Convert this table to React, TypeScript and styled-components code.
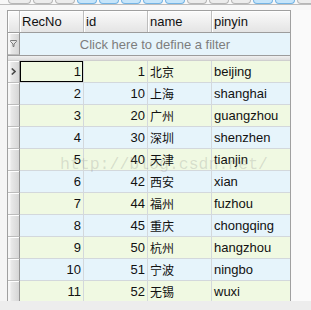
import React from "react";
import styled, { createGlobalStyle } from "styled-components";

const GlobalStyle = createGlobalStyle`
  html, body { margin: 0; padding: 0; background: #f7f7f7; }
  body { font-family: "Liberation Sans", Arial, sans-serif; }
`;

const COLS = "12px 64px 64px 64px 78px";

const Page = styled.div`
  position: relative;
  width: 311px;
  height: 310px;
  overflow: hidden;
  display: flex;
  flex-direction: column;
  background: #f7f7f7;
`;

const TopStrip = styled.div`
  height: 4px;
  border-bottom: 1px solid #bdbdbd;
  display: flex;
  gap: 2px;
  padding-left: 8px;
  align-items: flex-start;
`;

const TabButton = styled.div<{ $blue?: boolean; $wide?: boolean }>`
  flex: none;
  width: ${(p) => (p.$wide ? 23 : 20)}px;
  height: 4px;
  box-sizing: border-box;
  border: 1px solid ${(p) => (p.$blue ? "#74b4e4" : "#b6b6b6")};
  border-top: none;
  border-radius: 0 0 4px 4px;
  background: ${(p) => (p.$blue ? "#c6e5fa" : "#ececec")};
`;

const Main = styled.div`
  margin-top: 5px;
  display: flex;
  height: 291px;
`;

const LeftGutter = styled.div`
  width: 7px;
  background: #f5f5f5;
`;

const RightGutter = styled.div`
  flex: 1;
  background: #fafafa;
`;

const Grid = styled.div`
  width: 284px;
  box-sizing: border-box;
  border: 1px solid #a0a0a0;
  border-bottom: none;
  display: flex;
  flex-direction: column;
  overflow: hidden;
  background: #fff;
`;

const HeaderRow = styled.div`
  display: grid;
  grid-template-columns: ${COLS};
  height: 22px;
  box-sizing: border-box;
  border-bottom: 1px solid #9c9c9c;
`;

const HeaderCell = styled.div<{ $last?: boolean }>`
  box-sizing: border-box;
  background: linear-gradient(#fbfbfb, #e4e4e4);
  border-right: ${(p) => (p.$last ? "none" : "1px solid #bdbdbd")};
  box-shadow: inset 1px 1px 0 #ffffff;
  display: flex;
  align-items: center;
  padding-left: 2px;
  font-size: 13px;
  color: #111;
`;

const FilterRow = styled.div`
  display: grid;
  grid-template-columns: ${COLS};
  height: 22px;
`;

const Indicator = styled.div`
  box-sizing: border-box;
  border-right: 1px solid #949494;
  border-bottom: 1px solid #bcbcbc;
  background: linear-gradient(to right, #f6f6f6 0, #f6f6f6 2px, #e9e9e9 3px, #d6d6d6 100%);
  box-shadow: inset 0 1px 0 #ffffff;
  display: flex;
  align-items: center;
  justify-content: center;
`;

const FilterCell = styled.div`
  grid-column: 2 / -1;
  background: #e6f4fb;
  display: flex;
  align-items: center;
  justify-content: center;
  font-size: 13px;
  color: #7d7d7d;
`;

const Splitter = styled.div`
  height: 6px;
  box-sizing: border-box;
  border-top: 1px solid #9c9c9c;
  border-bottom: 1px solid #cfcfcf;
  background: linear-gradient(#f0f0f0, #dedede);
`;

const Body = styled.div`
  flex: 1;
  overflow: hidden;
`;

const DataRow = styled.div<{ $odd: boolean }>`
  display: grid;
  grid-template-columns: ${COLS};
  height: 22px;
  background: ${(p) => (p.$odd ? "#f0f9e2" : "#e6f4fb")};
`;

const Cell = styled.div<{ $align?: "left" | "right"; $last?: boolean; $cjk?: boolean; $bare?: boolean }>`
  box-sizing: border-box;
  border-right: ${(p) => (p.$last ? "none" : "1px solid #d3d8dc")};
  border-bottom: 1px solid #d3d8dc;
  display: flex;
  align-items: center;
  justify-content: ${(p) => (p.$align === "right" ? "flex-end" : "flex-start")};
  padding: ${(p) => (p.$bare ? "0" : p.$align === "right" ? "0 2px 0 0" : "0 0 0 2px")};
  font-size: ${(p) => (p.$cjk ? "12px" : "13px")};
  font-family: ${(p) =>
    p.$cjk
      ? '"Noto Sans CJK SC", "Liberation Sans", sans-serif'
      : '"Liberation Sans", Arial, sans-serif'};
  color: #111;
  white-space: nowrap;
`;

const FocusBox = styled.div`
  box-sizing: border-box;
  width: 100%;
  height: 100%;
  border: 1px solid #000;
  display: flex;
  align-items: center;
  justify-content: flex-end;
  padding-right: 1px;
`;

const BottomStrip = styled.div`
  height: 9px;
  background: #ededed;
`;

const Watermark = styled.div`
  position: absolute;
  left: 60px;
  top: 157px;
  font-family: "Liberation Mono", "Courier New", monospace;
  font-size: 16.5px;
  line-height: 1;
  color: rgba(110, 110, 110, 0.2);
  pointer-events: none;
  white-space: nowrap;
`;

const rows: [number, number, string, string][] = [
  [1, 1, "北京", "beijing"],
  [2, 10, "上海", "shanghai"],
  [3, 20, "广州", "guangzhou"],
  [4, 30, "深圳", "shenzhen"],
  [5, 40, "天津", "tianjin"],
  [6, 42, "西安", "xian"],
  [7, 44, "福州", "fuzhou"],
  [8, 45, "重庆", "chongqing"],
  [9, 50, "杭州", "hangzhou"],
  [10, 51, "宁波", "ningbo"],
  [11, 52, "无锡", "wuxi"],
];

const tabs = ["g", "g", "g", "b", "b", "b", "b", "b", "g", "g", "g", "b", "b", "g"];

const Funnel = () => (
  <svg width="7" height="7" viewBox="0 0 7 7">
    <path d="M0.5 0.5 H6.5 V1.5 L4 4 V6.5 H3 V4 L0.5 1.5 Z" fill="none" stroke="#7a7a7a" strokeWidth="1" />
  </svg>
);

const Arrow = () => (
  <svg width="5" height="7" viewBox="0 0 5 7">
    <path d="M0.8 0.5 L4 3.5 L0.8 6.5" fill="none" stroke="#4a4a4a" strokeWidth="1.6" />
  </svg>
);

export default function App() {
  return (
    <>
      <GlobalStyle />
      <Page>
        <TopStrip>
          {tabs.map((t, i) => (
            <TabButton key={i} $blue={t === "b"} $wide={i === 0} />
          ))}
        </TopStrip>
        <Main>
          <LeftGutter />
          <Grid>
            <HeaderRow>
              <HeaderCell />
              <HeaderCell>RecNo</HeaderCell>
              <HeaderCell>id</HeaderCell>
              <HeaderCell>name</HeaderCell>
              <HeaderCell $last>pinyin</HeaderCell>
            </HeaderRow>
            <FilterRow>
              <Indicator>
                <Funnel />
              </Indicator>
              <FilterCell>Click here to define a filter</FilterCell>
            </FilterRow>
            <Splitter />
            <Body>
              {rows.map(([rec, id, name, py], i) => (
                <DataRow key={rec} $odd={i % 2 === 0}>
                  <Indicator>{i === 0 ? <Arrow /> : null}</Indicator>
                  {i === 0 ? (
                    <Cell $align="right" $bare>
                      <FocusBox>{rec}</FocusBox>
                    </Cell>
                  ) : (
                    <Cell $align="right">{rec}</Cell>
                  )}
                  <Cell $align="right">{id}</Cell>
                  <Cell $cjk>{name}</Cell>
                  <Cell $last>{py}</Cell>
                </DataRow>
              ))}
            </Body>
          </Grid>
          <RightGutter />
        </Main>
        <BottomStrip />
        <Watermark>http://blog.csdn.net/</Watermark>
      </Page>
    </>
  );
}
